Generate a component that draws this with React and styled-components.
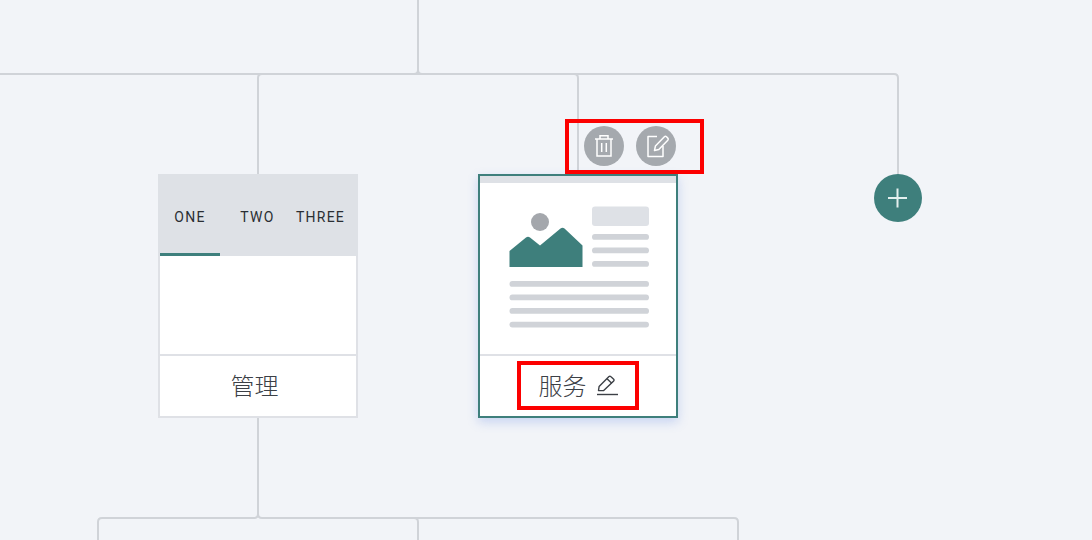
import React from "react";
import styled, { createGlobalStyle } from "styled-components";

const Global = createGlobalStyle`
  html, body { margin: 0; padding: 0; background: #f2f4f8; }
  * { box-sizing: border-box; }
`;

const Canvas = styled.div`
  position: relative;
  width: 1092px;
  height: 540px;
  overflow: hidden;
  background: #f2f4f8;
  font-family: "Noto Sans", "Noto Sans CJK SC", sans-serif;
`;

const Wires = styled.svg`
  position: absolute;
  inset: 0;
`;

const Card = styled.div`
  position: absolute;
  left: ${(p) => p.$x}px;
  top: 174px;
  width: 200px;
  height: 244px;
  display: flex;
  flex-direction: column;
  background: #fff;
  border: 2px solid ${(p) => (p.$active ? "#3e7f7c" : "#dfe1e6")};
  box-shadow: ${(p) => (p.$active ? "0 4px 10px rgba(90,130,225,.28)" : "none")};
`;

const TabBar = styled.div`
  display: flex;
  height: 82px;
  margin: -2px -2px 0;
  padding: 2px 2px 0;
  background: #dee1e6;
  flex: none;
`;

const Tab = styled.div`
  flex: 0 0 ${(p) => p.$w}px;
  display: flex;
  align-items: center;
  justify-content: center;
  font-family: "Roboto", sans-serif;
  font-size: 14px;
  letter-spacing: 1.25px;
  white-space: nowrap;
  color: #2a2e33;
  padding-top: 5px;
  border-bottom: 3px solid ${(p) => (p.$on ? "#3e7f7c" : "transparent")};
`;

const Body = styled.div`
  flex: 1;
  min-height: 0;
`;

const PreviewStrip = styled.div`
  height: 7px;
  background: #dee1e6;
`;

const Preview = styled.svg`
  display: block;
  width: 196px;
  height: 171px;
`;

const Footer = styled.div`
  flex: none;
  height: 62px;
  border-top: 2px solid #dfe1e6;
  display: flex;
  align-items: center;
  justify-content: center;
  gap: 9px;
  font-size: 24px;
  font-weight: 300;
  color: #3c4046;
  padding-bottom: 3px;
  padding-right: ${(p) => (p.$offset ? 7 : 0)}px;
`;

const Mark = styled.div`
  position: absolute;
  left: ${(p) => p.$x}px;
  top: ${(p) => p.$y}px;
  width: ${(p) => p.$w}px;
  height: ${(p) => p.$h}px;
  border: 4px solid #fc0000;
  pointer-events: none;
`;

const Actions = styled.div`
  position: absolute;
  left: 584px;
  top: 126px;
  display: flex;
  gap: 12px;
`;

const ActionButton = styled.div`
  width: 40px;
  height: 40px;
  border-radius: 50%;
  background: #a5a9ae;
  display: flex;
  align-items: center;
  justify-content: center;
`;

const AddButton = styled.div`
  position: absolute;
  left: 874px;
  top: 174px;
  width: 48px;
  height: 48px;
  border-radius: 50%;
  background: #3e7f7c;
  display: flex;
  align-items: center;
  justify-content: center;
`;

const TrashIcon = () => (
  <svg width="40" height="40" viewBox="0 0 40 40" fill="none" stroke="#fff" strokeWidth="1.5">
    <path d="M11 13h18M16 13V9.8h8V13M13 13v17h14V13M17.7 17v9M22.3 17v9" />
  </svg>
);

const EditIcon = () => (
  <svg width="40" height="40" viewBox="0 0 40 40" fill="none" stroke="#fff" strokeWidth="1.5" strokeLinejoin="round">
    <path d="M21 10.5h-9v20h15V20" />
    <path d="M18.5 24.5l.9-4.4 9-9.3c.6-.6 1.5-.6 2.1 0l1.3 1.3c.6.6.6 1.5 0 2.1l-9 9.2z" />
  </svg>
);

const PencilIcon = () => (
  <svg width="22" height="22" viewBox="0 0 22 22" fill="none" stroke="#3c4046" strokeWidth="1.4" strokeLinejoin="round">
    <path d="M1 20.5h21" />
    <path d="M2.5 16.5l.6-4L13 2.6c.5-.5 1.2-.5 1.7 0l3 2.7c.5.5.5 1.2 0 1.7l-10 9.6z" />
    <path d="M11 4.8l4.8 4.4" />
  </svg>
);

const PlusIcon = () => (
  <svg width="20" height="20" viewBox="0 0 20 20" stroke="#e4efee" strokeWidth="2">
    <path d="M0 10h19M9.5 .5v19" />
  </svg>
);

const wirePaths = [
  "M418 0V70q0 4-4 4H0",
  "M418 70q0 4 4 4H894q4 0 4 4V175",
  "M258 175V78q0-4 4-4H574q4 0 4 4V175",
  "M258 418V514q0 4-4 4H102q-4 0-4 4V540",
  "M258 514q0 4 4 4H734q4 0 4 4V540",
  "M414 518q4 0 4 4V540",
];

const shortLines = [234, 247.5, 261];
const longLines = [281, 294.5, 308, 321.7];

export default function App() {
  return (
    <Canvas>
      <Global />
      <Wires width="1092" height="540" fill="none" stroke="#d0d3d8" strokeWidth="2">
        {wirePaths.map((d) => (
          <path key={d} d={d} />
        ))}
      </Wires>

      <Card $x={158}>
        <TabBar>
          <Tab $w={60} $on>ONE</Tab>
          <Tab $w={75}>TWO</Tab>
          <Tab $w={51}>THREE</Tab>
        </TabBar>
        <Body />
        <Footer $offset>管理</Footer>
      </Card>

      <Card $x={478} $active>
        <PreviewStrip />
        <Preview viewBox="480 183 196 171">
          <circle cx="540" cy="222" r="9" fill="#a4a7ac" />
          <path
            d="M509.5 251L526 237.5q2-1.5 4 0L540 245.5L560.5 228.5q2-1.5 4 0L582.5 245.5V267H509.5z"
            fill="#3e7f7c"
          />
          <rect x="592" y="206.5" width="57" height="19.5" rx="3" fill="#dee1e6" />
          {shortLines.map((y) => (
            <rect key={y} x="592" y={y} width="57" height="5.8" rx="2.9" fill="#d0d3d8" />
          ))}
          {longLines.map((y) => (
            <rect key={y} x="509.5" y={y} width="139.5" height="5.8" rx="2.9" fill="#d0d3d8" />
          ))}
        </Preview>
        <Footer>
          <span>服务</span>
          <PencilIcon />
        </Footer>
      </Card>

      <Actions>
        <ActionButton><TrashIcon /></ActionButton>
        <ActionButton><EditIcon /></ActionButton>
      </Actions>

      <AddButton><PlusIcon /></AddButton>

      <Mark $x={565} $y={119} $w={139} $h={55} />
      <Mark $x={517} $y={361} $w={122} $h={49} />
    </Canvas>
  );
}
